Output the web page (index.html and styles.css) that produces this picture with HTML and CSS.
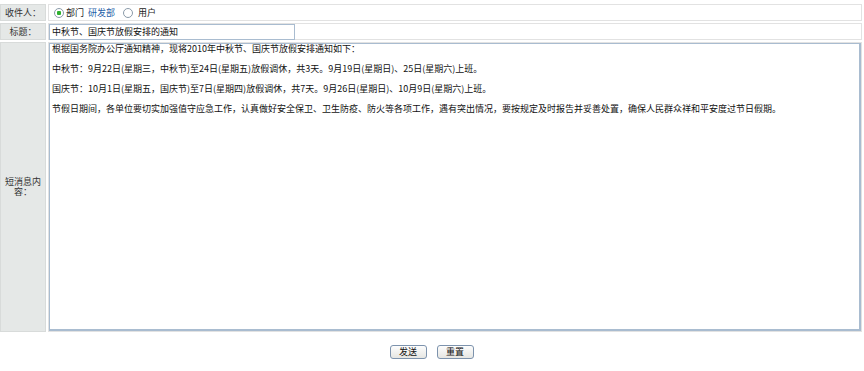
FILE: index.html
```html
<!DOCTYPE html>
<html lang="zh-CN">
<head>
    <meta charset="UTF-8">
    <title>发送短消息</title>
    <link rel="stylesheet" href="styles.css">
</head>
<body>
    <form class="msg_form">
        <div class="grid">
            <div class="label">收件人：</div>
            <div class="value">
                <label class="opt"><input type="radio" name="to" checked> 部门</label>
                <a href="#" class="dept">研发部</a>
                <label class="opt"><input type="radio" name="to"> 用户</label>
            </div>

            <div class="label">标题：</div>
            <div class="value">
                <input type="text" class="title_input" value="中秋节、国庆节放假安排的通知">
            </div>

            <div class="label label_mid">短消息内容：</div>
            <div class="value value_area">
                <textarea class="content">根据国务院办公厅通知精神，现将2010年中秋节、国庆节放假安排通知如下：

中秋节：9月22日(星期三，中秋节)至24日(星期五)放假调休，共3天。9月19日(星期日)、25日(星期六)上班。

国庆节：10月1日(星期五，国庆节)至7日(星期四)放假调休，共7天。9月26日(星期日)、10月9日(星期六)上班。

节假日期间，各单位要切实加强值守应急工作，认真做好安全保卫、卫生防疫、防火等各项工作，遇有突出情况，要按规定及时报告并妥善处置，确保人民群众祥和平安度过节日假期。</textarea>
            </div>
        </div>
        <p class="btns">
            <button type="button" class="btn">发送</button>
            <button type="reset" class="btn">重置</button>
        </p>
    </form>
</body>
</html>
```

FILE: styles.css
```css
* {
    margin: 0;
    padding: 0;
    box-sizing: border-box;
}

body {
    font-family: "Noto Sans CJK SC", "Noto Sans", sans-serif;
    font-size: 9px;
    color: #222;
    background: #fff;
}

.msg_form {
    width: 862px;
    padding-top: 4px;
}

.grid {
    display: grid;
    grid-template-columns: 46px 1fr;
    grid-template-rows: 17px 17px 290px;
    gap: 2px;
}

.label {
    background: #e5e8e7;
    border: 1px solid #d8dbda;
    color: #333;
    display: flex;
    align-items: center;
    justify-content: center;
    line-height: 10px;
    text-align: center;
    padding: 0 1px;
}

.value {
    border: 1px solid #e2e2e2;
    display: flex;
    align-items: center;
    padding-left: 5px;
}

.opt {
    display: flex;
    align-items: center;
    gap: 1px;
}

.opt input {
    appearance: none;
    width: 10px;
    height: 10px;
    border: 1px solid #8a9aa8;
    border-radius: 50%;
    background: #fff;
    margin-right: 1px;
}

.opt input:checked {
    background: radial-gradient(circle, #2fb12f 0 2px, #fff 2.5px);
}

.dept {
    color: #1f5fa8;
    text-decoration: none;
    margin: 0 8px 0 4px;
}

.opt + .dept + .opt input {
    margin-right: 4px;
}

.value:has(.title_input), .value_area {
    padding-left: 0;
}

.title_input {
    width: 246px;
    height: 16px;
    border: 1px solid #a9bcd0;
    font: inherit;
    color: #111;
    padding: 0 2px;
}

.value_area {
    align-items: stretch;
}

.content {
    width: 100%;
    height: 100%;
    border: 1px solid #a9bcd0;
    border-right-width: 2px;
    border-bottom-width: 2px;
    font: inherit;
    line-height: 10px;
    color: #111;
    padding: 0 2px;
    resize: none;
    overflow: hidden;
}

.btns {
    display: flex;
    justify-content: center;
    gap: 10px;
    margin-top: 13px;
    padding-left: 1px;
}

.btn {
    width: 37px;
    height: 14px;
    font: inherit;
    color: #111;
    border: 1px solid #7d93ad;
    border-radius: 3px;
    background: linear-gradient(#fdfdfd, #e6e6e2);
    line-height: 10px;
}
```
